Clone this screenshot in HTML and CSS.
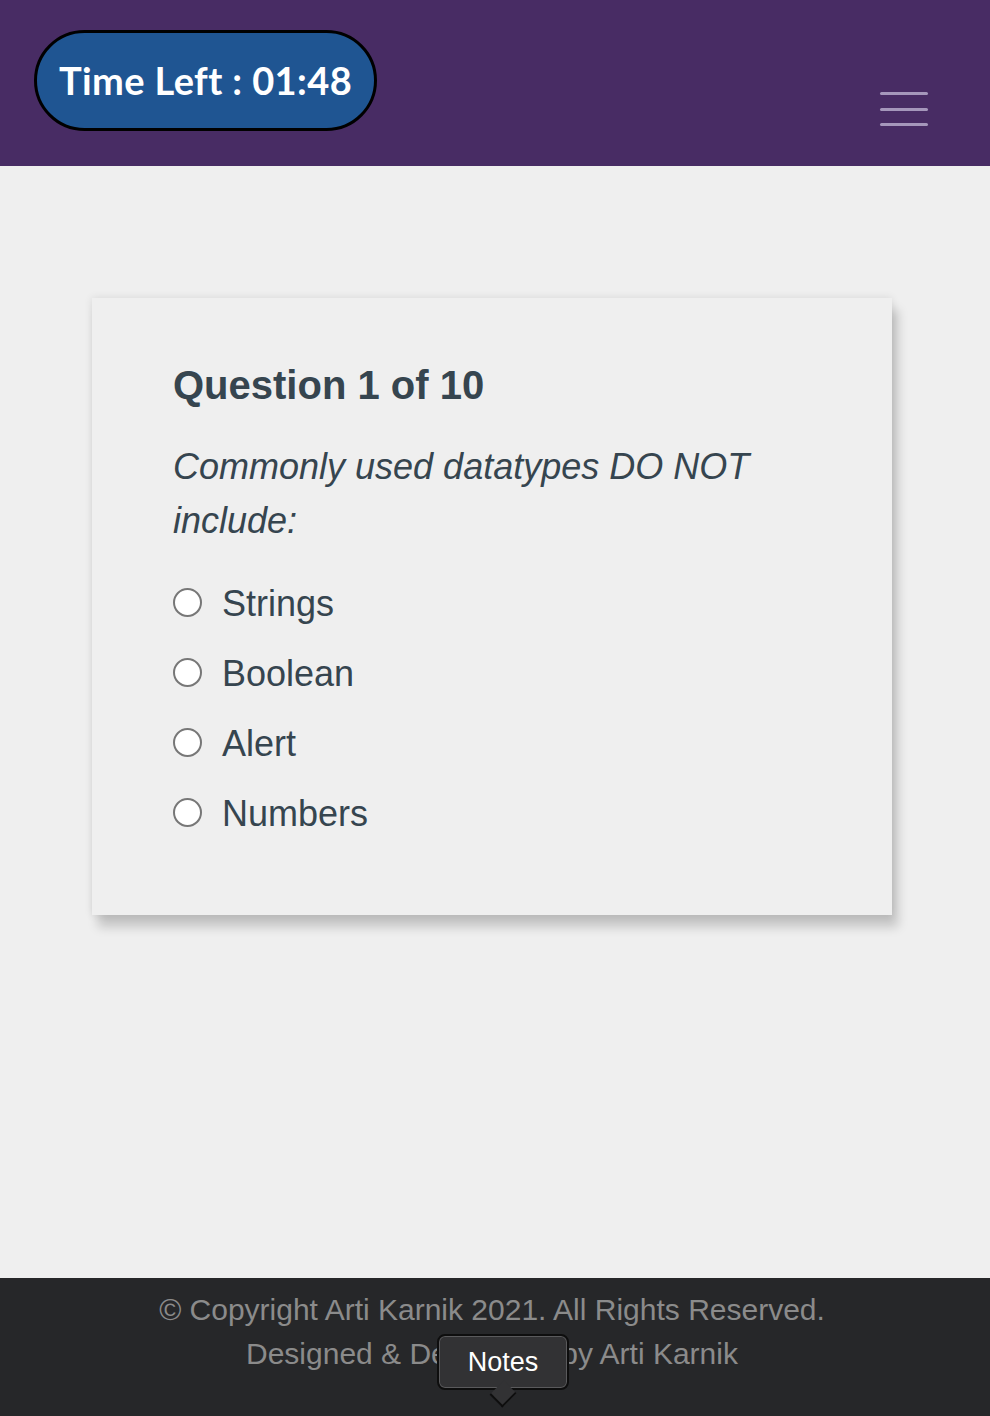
FILE: index.html
```html
<!DOCTYPE html>
<html lang="en">
<head>
<meta charset="utf-8">
<title>Quiz</title>
<link rel="stylesheet" href="styles.css">
</head>
<body>
<div class="page">
  <header class="topbar">
    <div class="timer">Time Left : 01:48</div>
    <button class="burger" aria-label="menu">
      <span></span><span></span><span></span>
    </button>
  </header>
  <main class="main">
    <section class="card">
      <h2 class="qnum">Question 1 of 10</h2>
      <p class="qtext">Commonly used datatypes DO NOT include:</p>
      <ul class="options">
        <li class="option"><span class="radio"></span><span>Strings</span></li>
        <li class="option"><span class="radio"></span><span>Boolean</span></li>
        <li class="option"><span class="radio"></span><span>Alert</span></li>
        <li class="option"><span class="radio"></span><span>Numbers</span></li>
      </ul>
    </section>
  </main>
  <footer class="footer">
    <p>© Copyright Arti Karnik 2021. All Rights Reserved.</p>
    <p>Designed &amp; Developed by Arti Karnik</p>
    <div class="tooltip">Notes</div>
  </footer>
</div>
</body>
</html>
```
FILE: styles.css
```css
* { box-sizing: border-box; }
html, body { margin: 0; padding: 0; }
body {
  background: #efefef;
  font-family: "Liberation Sans", Arial, sans-serif;
}
.page {
  min-height: 100vh;
  display: flex;
  flex-direction: column;
}
.topbar {
  height: 166px;
  background: #482c64;
  display: flex;
  align-items: flex-start;
  justify-content: space-between;
  padding: 30px 62px 0 34px;
}
.timer {
  width: 343px;
  height: 101px;
  border: 3px solid #000;
  border-radius: 51px;
  background: #1f5592;
  color: #fff;
  font-family: Lato, "Open Sans", sans-serif;
  font-weight: 700;
  font-size: 38px;
  display: flex;
  align-items: center;
  justify-content: center;
  letter-spacing: 0.4px;
  padding-bottom: 2px;
}
.burger {
  margin-top: 62px;
  width: 48px;
  height: 34px;
  padding: 0;
  border: 0;
  background: transparent;
  display: flex;
  flex-direction: column;
  justify-content: space-between;
}
.burger span {
  display: block;
  width: 48px;
  height: 3px;
  border-radius: 2px;
  background: #a597bb;
}
.main {
  flex: 1;
}
.card {
  width: 800px;
  margin: 132px 0 0 92px;
  background: #efefef;
  box-shadow: 0 0 8px rgba(0,0,0,0.1), 6px 12px 10px rgba(0,0,0,0.18);
  padding: 63px 80px 66px 81px;
  color: #36454f;
}
.qnum {
  margin: 0;
  font-size: 40px;
  line-height: 48px;
  font-weight: 700;
}
.qtext {
  margin: 31px 0 21px;
  font-size: 36px;
  line-height: 54px;
  font-style: italic;
  width: 620px;
}
.options {
  list-style: none;
  margin: 0;
  padding: 0;
}
.option {
  display: flex;
  align-items: center;
  height: 70px;
  font-size: 36px;
}
.radio {
  width: 29px;
  height: 29px;
  border: 2px solid #777;
  border-radius: 50%;
  background: #fff;
  margin-right: 20px;
  margin-top: -4px;
  flex: none;
}
.footer {
  position: relative;
  height: 138px;
  background: #262729;
  color: #8b8b8b;
  text-align: center;
  padding: 10px 6px 0 0;
  font-size: 30px;
}
.footer p {
  margin: 0;
  line-height: 44px;
}
.tooltip {
  position: absolute;
  left: 437px;
  top: 56px;
  width: 132px;
  height: 56px;
  background: #323234;
  border: 2px solid #0e0e0e;
  border-radius: 8px;
  box-shadow: inset 0 0 0 1px #5a5a5c;
  color: #fff;
  font-size: 27px;
  display: flex;
  align-items: center;
  justify-content: center;
}
.tooltip::after {
  content: "";
  position: absolute;
  left: 54px;
  bottom: -16px;
  width: 18px;
  height: 18px;
  background: #323234;
  border-right: 2px solid #0e0e0e;
  border-bottom: 2px solid #0e0e0e;
  transform: rotate(45deg) scaleX(0.9);
}
```
